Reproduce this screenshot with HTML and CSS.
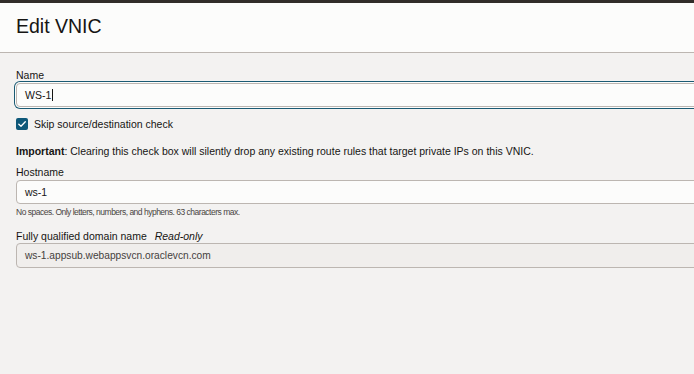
FILE: index.html
```
<!DOCTYPE html>
<html lang="en">
<head>
<meta charset="utf-8">
<title>Edit VNIC</title>
<link rel="stylesheet" href="styles.css">
</head>
<body>
<div class="topbar"></div>
<header class="header">
  <h1 class="title">Edit VNIC</h1>
</header>
<main class="form">
  <div class="field">
    <label class="label" for="name">Name</label>
    <div class="input focused"><span class="value">WS-1</span><span class="caret"></span></div>
  </div>
  <div class="check-row">
    <span class="checkbox">
      <svg viewBox="0 0 12 12" width="12" height="12"><path d="M2.8 6.2 L5 8.3 L9.3 3.8" fill="none" stroke="#fff" stroke-width="1.3" stroke-linecap="round" stroke-linejoin="round"/></svg>
    </span>
    <span class="check-label">Skip source/destination check</span>
  </div>
  <p class="note"><strong>Important</strong>: Clearing this check box will silently drop any existing route rules that target private IPs on this VNIC.</p>
  <div class="field">
    <label class="label">Hostname</label>
    <div class="input"><span class="value">ws-1</span></div>
    <p class="help">No spaces. Only letters, numbers, and hyphens. 63 characters max.</p>
  </div>
  <div class="field">
    <label class="label">Fully qualified domain name <em class="ro">Read-only</em></label>
    <div class="input readonly"><span class="value">ws-1.appsub.webappsvcn.oraclevcn.com</span></div>
  </div>
</main>
</body>
</html>
```

FILE: styles.css
```
html, body {
  margin: 0;
  padding: 0;
  height: 100%;
  overflow: hidden;
}
body {
  background: #f3f2f1;
  font-family: "Liberation Sans", Arial, sans-serif;
  color: #161513;
  font-size: 10.5px;
}
.topbar {
  height: 3px;
  background: #312d2a;
}
.header {
  height: 49px;
  background: #fcfcfb;
  border-bottom: 1px solid #bcb6b1;
  display: flex;
  align-items: center;
  padding-left: 16px;
}
.title {
  margin: 0;
  font-size: 19.5px;
  font-weight: normal;
  color: #161513;
  padding-bottom: 2px;
}
.form {
  padding: 16px 0 0 16px;
  overflow: hidden;
}
.field {
  display: flex;
  flex-direction: column;
}
.label {
  font-size: 10.5px;
  line-height: 13px;
  margin-bottom: 1px;
  color: #161513;
}
.ro {
  font-style: italic;
  margin-left: 5px;
}
.input {
  height: 22px;
  margin-right: -12px;
  border: 1px solid #bcb6b1;
  border-radius: 4px;
  background: #fcfcfb;
  display: flex;
  align-items: center;
  padding-left: 8px;
  font-size: 10.5px;
}
.input.focused {
  box-shadow: 0 0 0 1px #fcfcfb, 0 0 0 2px #1a5a73;
}
.input.readonly {
  margin-top: -1px;
  height: 23px;
  background: #f0eeec;
  color: #45413d;
  font-size: 10.2px;
}
.caret {
  display: inline-block;
  width: 1px;
  height: 12px;
  background: #161513;
  margin-left: 1px;
}
.check-row {
  display: flex;
  align-items: center;
  margin-top: 10px;
  height: 14px;
}
.checkbox {
  width: 12px;
  height: 12px;
  border-radius: 2px;
  background: #0e5879;
  display: inline-flex;
  align-items: center;
  justify-content: center;
  margin-right: 6px;
}
.checkbox svg {
  display: block;
}
.check-label {
  font-size: 10.5px;
}
.note {
  margin: 14px 0 8px;
  font-size: 10.5px;
  line-height: 13px;
}
.note strong {
  font-weight: bold;
}
.help {
  margin: 3px 0 13px;
  font-size: 8.5px;
  letter-spacing: -0.5px;
  color: #4a4542;
  line-height: 10px;
}
```
